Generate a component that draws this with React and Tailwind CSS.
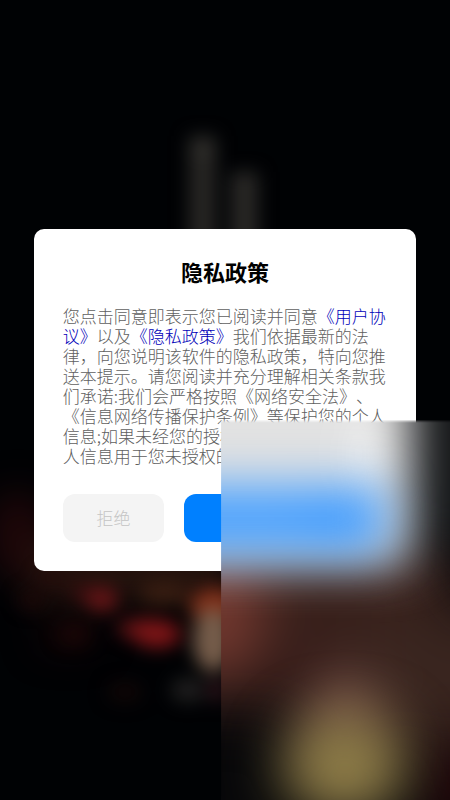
function NightBackdrop() {
  return (
    <svg
      aria-hidden="true"
      className="absolute inset-0 h-full w-full"
      viewBox="0 0 450 800"
      preserveAspectRatio="none"
      colorInterpolationFilters="sRGB"
    >
      <defs>
        <filter id="soft" filterUnits="userSpaceOnUse" x="-60" y="0" width="600" height="860">
          <feGaussianBlur stdDeviation="9" />
        </filter>
        <filter id="wide" filterUnits="userSpaceOnUse" x="-60" y="300" width="600" height="500">
          <feGaussianBlur stdDeviation="18" />
        </filter>
      </defs>
      <rect width="450" height="800" fill="#000204" />
      <g filter="url(#soft)">
        <rect x="189" y="136" width="27" height="110" fill="#272624" />
        <rect x="231" y="172" width="27" height="80" fill="#292826" />
        <ellipse cx="203" cy="149" rx="12" ry="10" fill="#302f2c" />
      </g>
      <g filter="url(#wide)">
        <ellipse cx="18" cy="535" rx="30" ry="45" fill="#1e0709" />
        <rect x="30" y="545" width="200" height="54" fill="#28150f" />
        <ellipse cx="68" cy="635" rx="30" ry="14" fill="#160405" />
      </g>
      <g filter="url(#soft)">
        <ellipse cx="32" cy="600" rx="13" ry="9" fill="#1e0808" />
        <ellipse cx="54" cy="577" rx="16" ry="6" fill="#240a0a" />
        <ellipse cx="84" cy="592" rx="14" ry="8" fill="#3a0e0f" />
        <ellipse cx="102" cy="599" rx="16" ry="12" fill="#681517" />
        <ellipse cx="74" cy="634" rx="16" ry="10" fill="#1c0607" />
        <ellipse cx="145" cy="629" rx="28" ry="11" fill="#5f1315" />
        <ellipse cx="157" cy="634" rx="24" ry="14" fill="#7e1517" />
        <ellipse cx="164" cy="592" rx="26" ry="10" fill="#3c1f12" />
        <ellipse cx="214" cy="606" rx="24" ry="19" fill="#7f301a" />
        <ellipse cx="213" cy="640" rx="20" ry="32" fill="#755c4a" />
        <ellipse cx="188" cy="690" rx="17" ry="12" fill="#201f1f" />
        <ellipse cx="125" cy="692" rx="18" ry="10" fill="#100606" />
        <ellipse cx="217" cy="690" rx="8" ry="12" fill="#34151d" />
      </g>
    </svg>
  );
}

function FrostedPane() {
  return (
    <svg
      aria-hidden="true"
      className="pointer-events-none absolute right-0 bottom-0 h-[380px] w-[51%]"
      viewBox="0 0 230 380"
      preserveAspectRatio="none"
      colorInterpolationFilters="sRGB"
    >
      <defs>
        <filter id="edge" filterUnits="userSpaceOnUse" x="-10" y="-10" width="280" height="430">
          <feGaussianBlur stdDeviation="1.2" />
        </filter>
        <filter id="haze" filterUnits="userSpaceOnUse" x="-160" y="-160" width="560" height="720">
          <feGaussianBlur stdDeviation="24" />
        </filter>
        <filter id="glow" filterUnits="userSpaceOnUse" x="-160" y="-160" width="560" height="720">
          <feGaussianBlur stdDeviation="28" />
        </filter>
        <mask id="pane">
          <rect x="-1" y="1" width="260" height="410" fill="#fff" filter="url(#edge)" />
        </mask>
      </defs>
      <g mask="url(#pane)">
        <rect width="230" height="380" fill="#08080a" />
        <g filter="url(#glow)">
          <rect x="-60" y="120" width="290" height="165" fill="#38201b" />
          <rect x="150" y="190" width="140" height="130" fill="#39251f" />
          <ellipse cx="-5" cy="190" rx="48" ry="70" fill="#73382f" />
          <ellipse cx="80" cy="260" rx="28" ry="30" fill="#2e1413" />
          <ellipse cx="238" cy="370" rx="30" ry="50" fill="#26060a" />
          <ellipse cx="122" cy="302" rx="38" ry="50" fill="#75524a" />
        </g>
        <g filter="url(#glow)">
          <ellipse cx="124" cy="346" rx="62" ry="52" fill="#8f7e48" />
        </g>
        <g filter="url(#haze)">
          <rect x="196" y="-100" width="120" height="225" fill="#141618" />
          <rect x="-100" y="-100" width="290" height="246" fill="#e2e2e2" />
          <ellipse cx="164" cy="34" rx="22" ry="44" fill="#fafafa" />
        </g>
        <g filter="url(#haze)">
          <rect x="-100" y="66" width="264" height="66" fill="#47a0ff" />
          <ellipse cx="118" cy="98" rx="40" ry="26" fill="#3c9aff" />
        </g>
      </g>
    </svg>
  );
}

export default function App() {
  return (
    <main className="relative flex min-h-screen items-center justify-center overflow-hidden bg-black font-['Noto_Sans_CJK_SC',sans-serif]">
      <NightBackdrop />
      <section
        role="dialog"
        aria-labelledby="dialog-title"
        className="relative flex w-[85%] flex-col rounded-[10px] bg-white px-[29px] pt-[26px] pb-[29px]"
      >
        <h1 id="dialog-title" className="text-center text-[22px] leading-8 font-bold text-black">
          隐私政策
        </h1>
        <p className="mt-[19px] text-[17px] leading-5 font-light text-[#606060] [text-spacing-trim:space-all]">
          您点击同意即表示您已阅读并同意
          <a href="#agreement" className="text-[#0000b8]">《用户协议》</a>
          以及
          <a href="#privacy" className="text-[#0000b8]">《隐私政策》</a>
          我们依据最新的法律，向您说明该软件的隐私政策，特向您推送本提示。请您阅读并充分理解相关条款我们承诺:我们会严格按照《网络安全法》、《信息网络传播保护条例》等保护您的个人信息;如果未经您的授权
          <br />
          人信息用于您未授权的
        </p>
        <div className="mt-7 flex gap-5">
          <button
            type="button"
            className="h-12 flex-1 rounded-xl bg-[#f4f4f4] text-[17px] font-light text-[#c4c4c4]"
          >
            拒绝
          </button>
          <button type="button" aria-label="同意" className="h-12 flex-2 rounded-xl bg-[#0080ff]" />
        </div>
      </section>
      <FrostedPane />
    </main>
  );
}
